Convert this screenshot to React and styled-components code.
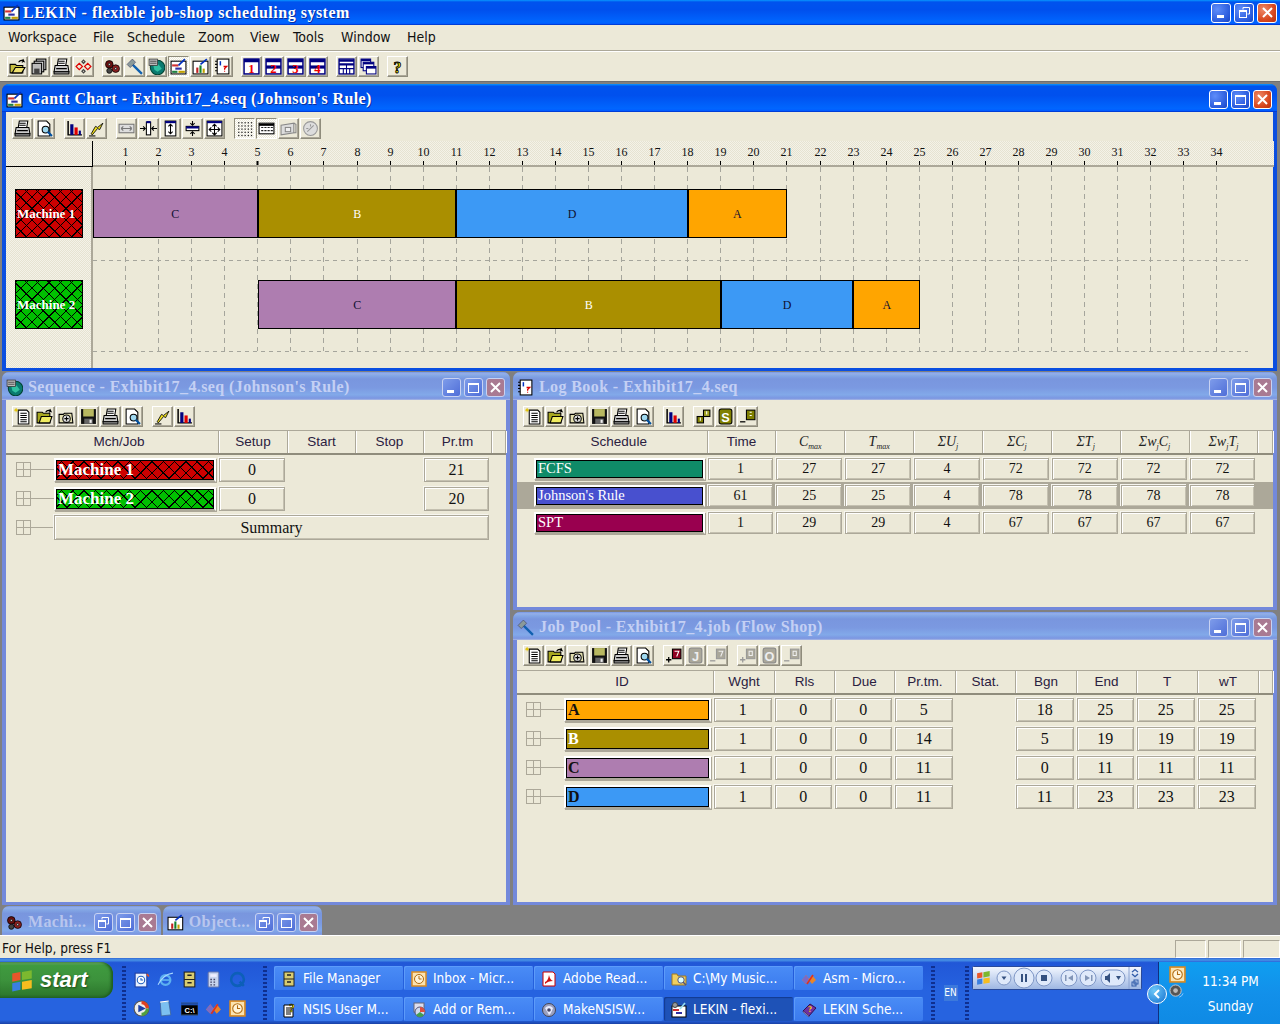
import React from 'react'
import styled, { createGlobalStyle, css } from 'styled-components'

const GlobalStyle = createGlobalStyle`
  html, body { margin: 0; padding: 0; background: #808080; }
  * { box-sizing: border-box; }
`

const SANS = `"Liberation Sans", Arial, sans-serif`
const UI = `"DejaVu Sans Condensed", "Liberation Sans", Arial, sans-serif`
const SERIF = `"Liberation Serif", "Times New Roman", serif`
const FACE = '#ECE9D8'
const UNIT = 33.07

const FLAG = (
  <g>
    <path d="M2 4 L7 3 L7 8 L2 9 Z" fill="#e8562a" />
    <path d="M8 3 L14 2 L14 7 L8 8 Z" fill="#7cb82f" />
    <path d="M2 10 L7 9 L7 14 L2 15 Z" fill="#3a7fe0" />
    <path d="M8 9 L14 8 L14 13 L8 14 Z" fill="#f6bd1f" />
  </g>
)

const winIcon = (n) => (
  <g>
    <rect x="1" y="1" width="14" height="14" fill="#fff" stroke="#000080" strokeWidth="1.4" />
    <rect x="1" y="1" width="14" height="3" fill="#000080" />
    {n > 1 && <rect x="1" y="7" width="14" height="3" fill="#000080" />}
    <text x="8" y="14" textAnchor="middle" fontSize="12" fontWeight="700" fontFamily={SERIF} fill="#f00000">{n}</text>
  </g>
)

const ICONS = {
  open: <g><path d="M1 6h5l1 1h6v7H1z" fill="#c8c040" stroke="#000" /><path d="M3 14l3-5h9l-3 5z" fill="#eee070" stroke="#000" /><path d="M9 4q2-3 5-1l-1-2m1 2l-2 1" fill="none" stroke="#000" /></g>,
  copies: <g><rect x="5" y="1" width="9" height="10" fill="#ccc" stroke="#000" /><rect x="3" y="3" width="9" height="10" fill="#ddd" stroke="#000" /><rect x="1" y="5" width="9" height="10" fill="#bbb" stroke="#000" /><rect x="3" y="10" width="5" height="5" fill="#444" /></g>,
  print: <g><path d="M5 1h8l-1 6H4z" fill="#fff" stroke="#000" /><path d="M2 7h12l1 6H1z" fill="#ccc" stroke="#000" /><path d="M1 13h14v2H1z" fill="#999" stroke="#000" /><path d="M5 3h6M5 5h6M3 10h10" stroke="#000" /></g>,
  net: <g fill="none" stroke="#d00" strokeWidth="1.1"><path d="M1 8l3-3 3 3-3 3zM9 8l3-3 3 3-3 3z" /><path d="M8 2l1.500 1.500L8 5 6.500 3.500zM8 11l1.500 1.500L8 14l-1.500-1.500z" stroke="#444" /></g>,
  gears: <g fill="#6a1010" stroke="#000" strokeWidth=".7"><circle cx="5" cy="6" r="3.6" /><circle cx="11" cy="10" r="3.6" fill="#8a2020" /><circle cx="5" cy="12" r="2.4" fill="#444" /><circle cx="5" cy="6" r="1" fill="#eee" /><circle cx="11" cy="10" r="1" fill="#eee" /></g>,
  hammer: <g><path d="M6 6l9 9" stroke="#1060b0" strokeWidth="2.2" /><path d="M1 6l5-5 3 3-5 5z" fill="#8a9a9a" stroke="#446" strokeWidth=".6" /></g>,
  globe: <g><circle cx="9" cy="9" r="6.8" fill="#0a7a70" stroke="#043" /><path d="M5 7l5-1 3 4-4 3-3-2z" fill="#30c0a0" /><rect x="1" y="1" width="8" height="6" fill="#bbb" stroke="#333" strokeWidth=".7" /><path d="M2 3h6M2 5h6" stroke="#555" /></g>,
  gantt: <g><rect x="1" y="3" width="14" height="12" fill="#fff" stroke="#000" /><path d="M2 6h6v2H2z" fill="#d03030" /><path d="M5 9h6v2H5z" fill="#3030a0" /><path d="M8 12h6v2H8z" fill="#c0a000" /><path d="M2 12h5v2H2z" fill="#208040" /><path d="M8 7l6-6" stroke="#0030c0" strokeWidth="1.6" /></g>,
  chart: <g><rect x="1" y="3" width="14" height="12" fill="#fff" stroke="#000" /><path d="M4 9h2v5H4z" fill="#c02020" /><path d="M7 7h2v7H7z" fill="#108030" /><path d="M10 10h2v4h-2z" fill="#c0a000" /><path d="M8 6l6-5" stroke="#0030c0" strokeWidth="1.6" /></g>,
  note: <g><rect x="3" y="1" width="11" height="14" fill="#fff" stroke="#000" /><path d="M3 3H1M3 6H1M3 9H1M3 12H1" stroke="#000" /><path d="M6 3v4" stroke="#0030c0" strokeWidth="1.4" /><path d="M9 8h3l-2 2v1" fill="none" stroke="#d00" strokeWidth="1.2" /><path d="M10 12v1" stroke="#d00" /></g>,
  w1: winIcon(1),
  w2: winIcon(2),
  w3: winIcon(3),
  w4: winIcon(4),
  tile: <g><rect x="1" y="1" width="14" height="14" fill="#fff" stroke="#000080" strokeWidth="1.3" /><path d="M1 2.5h14M1 6h14" stroke="#000080" strokeWidth="2" /><path d="M1 10h14M8 6v9M5 10v5M11 10v5" stroke="#000080" /></g>,
  cascade: <g><rect x="1" y="1" width="9" height="8" fill="#fff" stroke="#000080" /><path d="M1 2h9" stroke="#000080" strokeWidth="2" /><rect x="3" y="4" width="10" height="8" fill="#fff" stroke="#000080" /><path d="M3 5h10" stroke="#000080" strokeWidth="2" /><rect x="6" y="8" width="9" height="7" fill="#fff" stroke="#000080" /><path d="M6 9h9" stroke="#000080" strokeWidth="2" /></g>,
  help: <text x="8" y="14" textAnchor="middle" fontSize="15" fontWeight="700" fontFamily={SERIF} fill="#f5e800" stroke="#000" strokeWidth=".8">?</text>,
  preview: <g><path d="M2 1h8l3 3v11H2z" fill="#fff" stroke="#000" /><circle cx="9" cy="9" r="3.2" fill="#9fd8f0" stroke="#000" /><path d="M11 11l4 4" stroke="#0050a0" strokeWidth="2" /></g>,
  bars: <g><path d="M2 1v13h13" fill="none" stroke="#000" strokeWidth="1.4" /><path d="M4 4h3v10H4z" fill="#000080" /><path d="M8 7h3v7H8z" fill="#e00000" /><path d="M12 10h2v4h-2z" fill="#000080" /></g>,
  bolt: <g><path d="M3 13L7 6l2 1 5-4-3 6-2-1-5 6z" fill="#f0e020" stroke="#000" strokeWidth=".8" /><path d="M1 15h6" stroke="#000" /></g>,
  fitH: <g fill="none" stroke="#777"><rect x="1" y="4" width="14" height="8" fill="#ddd" /><path d="M3 8h10M3 8l2-2M3 8l2 2M13 8l-2-2M13 8l-2 2" /></g>,
  inH: <g fill="none" stroke="#000"><rect x="6" y="2" width="4" height="12" fill="#fff" /><path d="M6 2h4" stroke="#000080" strokeWidth="2" /><path d="M0 8h5M3 6l2 2-2 2M16 8h-5M13 6l-2 2 2 2" /></g>,
  outV: <g fill="none" stroke="#000"><rect x="3" y="1" width="10" height="14" fill="#fff" /><path d="M3 2h10" stroke="#000080" strokeWidth="2" /><path d="M8 4v9M6 6l2-2 2 2M6 11l2 2 2-2" /></g>,
  inV: <g fill="none" stroke="#000"><rect x="2" y="6" width="12" height="4" fill="#fff" /><path d="M2 7h12" stroke="#000080" strokeWidth="2" /><path d="M8 1v4M6 3l2 2 2-2M8 15v-4M6 13l2-2 2 2" /></g>,
  fitAll: <g fill="none" stroke="#000"><rect x="1" y="1" width="14" height="14" fill="#fff" /><path d="M1 2h14" stroke="#000080" strokeWidth="2" /><path d="M8 4v10M3 9h10M6 6l2-2 2 2M6 12l2 2 2-2M5 7L3 9l2 2M11 7l2 2-2 2" /></g>,
  dots: <g fill="#222">{[2, 5, 8, 11, 14].map((y) => [2, 5, 8, 11, 14].map((x) => <rect key={`${x}${y}`} x={x} y={y} width="1.2" height="1.2" />))}</g>,
  table: <g><rect x="1" y="3" width="14" height="10" fill="#fff" stroke="#000" /><path d="M1 4.500h14" stroke="#000" strokeWidth="2" /><path d="M3 7h2M6 7h2M9 7h2M12 7h2M3 10h2M6 10h2M9 10h2M12 10h2" stroke="#222" /></g>,
  grayNote: <g fill="none" stroke="#888"><path d="M1 5l12-2v9L1 14z" fill="#ddd" /><path d="M13 3l2 1v8l-2 0" /><rect x="5" y="7" width="5" height="4" fill="#eee" /></g>,
  grayDial: <g fill="#ddd" stroke="#999"><circle cx="8" cy="8" r="6.500" /><path d="M5 11l6-6M8 4v2M4 8h2" fill="none" /></g>,
  page: <g><path d="M4 2h8l2 2v11H4z" fill="#fff" stroke="#000" /><path d="M6 5h6M6 7h6M6 9h6M6 11h6M6 13h6" stroke="#000" /><path d="M1 1l2 2M3 1l-2 2M2 0v4M0 2h4" stroke="#e0c000" strokeWidth=".8" /></g>,
  folder: <g><path d="M1 4h5l1 1h6v9H1z" fill="#a8a820" stroke="#000" /><path d="M3 14l2-6h10l-2 6z" fill="#f0ec60" stroke="#000" /><path d="M9 4q2-3 5-1l-1-2m1 2l-2 1" fill="none" stroke="#000" /></g>,
  folderPlus: <g><path d="M1 6h4l1-1h7l1 9H1z" fill="#e4e0b0" stroke="#000" /><circle cx="8" cy="10" r="3.500" fill="#ddd" stroke="#000" /><path d="M6 10h4M8 8v4" stroke="#000" /></g>,
  save: <g><rect x="1" y="1" width="14" height="14" fill="#111" /><rect x="3" y="1" width="10" height="7" fill="#b8b860" /><rect x="4" y="10" width="8" height="5" fill="#666" /><rect x="9" y="11" width="2" height="3" fill="#eee" /></g>,
  chainS: <g><rect x="2" y="8" width="6" height="6" fill="#808000" stroke="#000" /><rect x="8" y="2" width="6" height="6" fill="#a0a020" stroke="#000" /><path d="M5 9v3M11 3v3" stroke="#fff" /></g>,
  sBox: <g><rect x="2" y="1" width="12" height="14" rx="2" fill="#808000" stroke="#000" /><text x="8" y="13" textAnchor="middle" fontSize="12" fontWeight="700" fontFamily={SANS} fill="#fff">S</text></g>,
  minusS: <g><path d="M1 13h5" stroke="#000" strokeWidth="1.2" /><rect x="7" y="2" width="8" height="9" fill="#808000" stroke="#000" /><path d="M10 4h2M10 7h2" stroke="#fff" /></g>,
  plusJ: <g><path d="M1 12h5M3.500 9.500v5" stroke="#000" strokeWidth="1.2" /><rect x="7" y="2" width="8" height="9" fill="#900020" stroke="#000" /><path d="M9 4h4l-2 5" fill="none" stroke="#fff" /></g>,
  jBox: <g><rect x="2" y="1" width="12" height="14" rx="2" fill="#aaa79a" stroke="#888" /><text x="8" y="13" textAnchor="middle" fontSize="12" fontWeight="700" fontFamily={SANS} fill="#eee">J</text></g>,
  minusJ: <g><path d="M1 13h5" stroke="#999" strokeWidth="1.2" /><rect x="7" y="2" width="8" height="9" fill="#aaa79a" stroke="#999" /><path d="M9 4h4l-2 5" fill="none" stroke="#eee" /></g>,
  plusO: <g><path d="M1 12h5M3.500 9.500v5" stroke="#999" strokeWidth="1.2" /><rect x="7" y="2" width="8" height="9" fill="#aaa79a" stroke="#999" /><rect x="9.500" y="4" width="3" height="4" fill="none" stroke="#eee" /></g>,
  oBox: <g><rect x="2" y="1" width="12" height="14" rx="2" fill="#aaa79a" stroke="#888" /><text x="8" y="13" textAnchor="middle" fontSize="12" fontWeight="700" fontFamily={SANS} fill="#eee">O</text></g>,
  minusO: <g><path d="M1 13h5" stroke="#999" strokeWidth="1.2" /><rect x="7" y="2" width="8" height="9" fill="#aaa79a" stroke="#999" /><rect x="9.500" y="4" width="3" height="4" fill="none" stroke="#eee" /></g>,
  // taskbar and quick launch
  outlook: <g><rect x="1" y="1" width="14" height="14" fill="#fbe3b0" stroke="#d98a20" strokeWidth="1.5" /><circle cx="8" cy="8" r="4.500" fill="#fff4d8" stroke="#b06a10" /><path d="M8 5v3h2.500" fill="none" stroke="#b06a10" /></g>,
  cabinet: <g><rect x="3" y="1" width="10" height="14" fill="#d8cc70" stroke="#222" /><path d="M3 8h10" stroke="#222" /><path d="M6 4h4M6 11h4" stroke="#222" strokeWidth="1.4" /></g>,
  pdf: <g><path d="M2 1h10l2 2v12H2z" fill="#fff" stroke="#c00" /><path d="M4 11q3-1 4-7 1 5 4 6-5 0-8 3z" fill="#d01010" /></g>,
  musicFolder: <g><path d="M1 3h5l1 2h8v9H1z" fill="#f0cf60" stroke="#a07820" /><circle cx="10" cy="9" r="3.200" fill="#dff" stroke="#557" /><path d="M12 11l3 3" stroke="#557" strokeWidth="1.500" /></g>,
  asm: <g><path d="M1 9l4-5 3 4 3-4 4 5-4 4-3-4-3 4z" fill="#e8862a" /><path d="M5 4l3 4-3 5-4-4z" fill="#7a6ac8" /><path d="M6 13l6-9" stroke="#e03020" strokeWidth="1.500" /></g>,
  nsis: <g><path d="M3 3h9v12H3z" fill="#fff" stroke="#000" /><path d="M5 6h5M5 8h5M5 10h5M5 12h5" stroke="#000" /><text x="11" y="10" textAnchor="middle" fontSize="12" fontWeight="700" fontFamily={SERIF} fill="#f5e800" stroke="#000" strokeWidth=".5">?</text></g>,
  addRemove: <g><rect x="3" y="1" width="10" height="9" fill="#dde" stroke="#667" /><circle cx="9" cy="10" r="5" fill="#cfd8f0" stroke="#557" /><path d="M9 10V5a5 5 0 0 1 5 5z" fill="#e05040" /><path d="M9 10l4 3a5 5 0 0 1-8 0z" fill="#40a050" /></g>,
  makensis: <g><circle cx="8" cy="8" r="6.500" fill="#9aa0c0" stroke="#445" /><path d="M4 6q4-4 8 0-2 6-4 7" fill="#e8ecff" /><circle cx="8" cy="8" r="1.800" fill="#446" /></g>,
  lekinTask: <g><rect x="1" y="4" width="14" height="11" fill="#fff" stroke="#000" /><path d="M2 7h6v2H2z" fill="#d03030" /><path d="M5 10h6v2H5z" fill="#3030a0" /><path d="M9 7l5-6" stroke="#9de" strokeWidth="1.600" /><circle cx="4" cy="3" r="2.500" fill="#999" stroke="#444" /></g>,
  book: <g><path d="M2 9l7-7 6 4-7 8z" fill="#7030a0" stroke="#301050" /><path d="M2 9l6 5v1L2 10z" fill="#eee" stroke="#301050" strokeWidth=".5" /><text x="9" y="10" textAnchor="middle" fontSize="8" fontWeight="700" fontFamily={SERIF} fill="#fd0">?</text></g>,
  clipboard: <g><rect x="2" y="2" width="11" height="13" fill="#e8f0ff" stroke="#2040a0" /><circle cx="7.500" cy="8.500" r="3.500" fill="#fff" stroke="#2060c0" /><path d="M7.500 6.500v2h2" fill="none" stroke="#2060c0" /><path d="M13 3l2 2" stroke="#e05020" strokeWidth="1.500" /></g>,
  ie: <g><circle cx="8" cy="8.500" r="4.500" fill="none" stroke="#5cb0f0" strokeWidth="2.200" /><path d="M4 8.500h8" stroke="#5cb0f0" strokeWidth="1.600" /><path d="M1 13q5-10 14-11" fill="none" stroke="#a8d8ff" /></g>,
  calc: <g><rect x="3" y="1" width="10" height="14" rx="1" fill="#c8d4ee" stroke="#6a7ab0" /><rect x="5" y="3" width="6" height="2.500" fill="#eef" /><path d="M5 8h1.500M8 8h1.500M5 10.500h1.500M8 10.500h1.500M5 13h1.500M8 13h1.500" stroke="#446" strokeWidth="1.200" /></g>,
  quicktime: <g fill="none"><circle cx="8" cy="8" r="6" stroke="#0d5fb8" strokeWidth="2.400" /><path d="M10 10l4 4" stroke="#0d5fb8" strokeWidth="2.400" /></g>,
  player: <g><circle cx="8" cy="8" r="7" fill="#eee" stroke="#555" /><path d="M8 1a7 7 0 0 1 7 7h-3a4 4 0 0 0-4-4z" fill="#e04020" /><path d="M15 8a7 7 0 0 1-7 7v-3a4 4 0 0 0 4-4z" fill="#50a040" /><path d="M5 4.500L12 8l-7 3.500z" fill="#1a3fa8" /></g>,
  notepad: <g><path d="M3 2l8-1 2 13-9 1z" fill="#7cc0f0" stroke="#406090" strokeWidth=".7" /><path d="M3 2l8-1" stroke="#fff" /></g>,
  cmd: <g><rect x="0" y="3" width="16" height="11" fill="#000" stroke="#345" /><rect x="0" y="3" width="16" height="2" fill="#2050b0" /><text x="8" y="12.500" textAnchor="middle" fontSize="7" fontWeight="700" fontFamily={SANS} fill="#fff">C:\</text></g>,
}

const Icon = ({ name, size = 17, className }) => (
  <svg className={className} width={size} height={size} viewBox="0 0 16 16">{ICONS[name]}</svg>
)

// window chrome

const XP_ACTIVE = 'linear-gradient(180deg,#0997ff 0,#0053ee 8%,#0050ee 40%,#0066ff 88%,#005bff 95%,#003dd7 96%,#003dd7 100%)'
const XP_IDLE = 'linear-gradient(180deg,#7697e7 0,#94afe8 6%,#82a5e4 14%,#7996de 25%,#7b99e1 56%,#82a9e9 81%,#7b96e1 94%,#abbae3 100%)'

const ChromeBtn = styled.span`
  flex: none;
  width: ${(p) => p.$size || 19}px;
  height: ${(p) => p.$size || 19}px;
  display: flex;
  align-items: center;
  justify-content: center;
  border: 1px solid ${(p) => (p.$idle ? '#c8d2f2' : '#fff')};
  border-radius: 3px;
  background: ${(p) => {
    if (p.$close) return p.$idle ? '#a97a92' : 'radial-gradient(circle at 30% 30%,#ee8a68,#d8481f 60%,#b8300e)'
    return p.$idle ? 'linear-gradient(135deg,#7e9cea,#4f6ed8)' : 'radial-gradient(circle at 30% 30%,#5e8dfa,#2a5bdc 70%,#1a45c0)'
  }};
`

const ChromeGroup = styled.div`
  display: flex;
  gap: 3px;
  margin-left: auto;
`

const MinGlyph = () => <svg width="13" height="13" viewBox="0 0 13 13"><rect x="2" y="9" width="7" height="3" fill="#fff" /></svg>
const RestoreGlyph = () => <svg width="13" height="13" viewBox="0 0 13 13" fill="none" stroke="#fff"><path d="M5 3.500V1.500h6.500V8H9.500" /><rect x="1.500" y="4.500" width="7" height="7" /><path d="M1.500 5h7" strokeWidth="2" /></svg>
const MaxGlyph = () => <svg width="13" height="13" viewBox="0 0 13 13" fill="none" stroke="#fff"><rect x="1.500" y="2.500" width="10" height="9" /><path d="M1.500 3h10" strokeWidth="2" /></svg>

// kinds: window = min/max/close, app = min/restore/close, docked = restore/max/close
const WinButtons = ({ idle, kind = 'window', size }) => (
  <ChromeGroup>
    <ChromeBtn $idle={idle} $size={size}>{kind === 'docked' ? <RestoreGlyph /> : <MinGlyph />}</ChromeBtn>
    <ChromeBtn $idle={idle} $size={size}>{kind === 'app' ? <RestoreGlyph /> : <MaxGlyph />}</ChromeBtn>
    <ChromeBtn $idle={idle} $close $size={size}>
      <svg width="13" height="13" viewBox="0 0 13 13" stroke="#fff" strokeWidth="2"><path d="M2 2l9 9M11 2l-9 9" /></svg>
    </ChromeBtn>
  </ChromeGroup>
)

const Frame = styled.section`
  display: flex;
  flex-direction: column;
  flex: ${(p) => p.$flex || 'none'};
  width: ${(p) => (p.$w ? `${p.$w}px` : 'auto')};
  height: ${(p) => (p.$h ? `${p.$h}px` : 'auto')};
  padding: 0 4px 3px;
  border-radius: 7px 7px 0 0;
  background: ${(p) => (p.$idle ? '#7389db' : '#0a4ee0')};
`

const FrameTitle = styled.header`
  flex: none;
  display: flex;
  align-items: center;
  gap: 5px;
  height: 28px;
  margin: 0 -4px;
  padding: 2px 5px 0 4px;
  border-radius: 7px 7px 0 0;
  background: ${(p) => (p.$idle ? XP_IDLE : XP_ACTIVE)};
  font: 700 16px/1 ${SERIF};
  letter-spacing: 0.4px;
  color: ${(p) => (p.$idle ? '#c4d0f4' : '#fff')};
  text-shadow: ${(p) => (p.$idle ? 'none' : '1px 1px 0 #0a2f9e')};
  white-space: nowrap;
`

const FrameBody = styled.div`
  flex: 1;
  min-height: 0;
  display: flex;
  flex-direction: column;
  background: ${FACE};
`

const Window = ({ title, icon, idle, w, h, flex, children }) => (
  <Frame $idle={idle} $w={w} $h={h} $flex={flex}>
    <FrameTitle $idle={idle}>
      <Icon name={icon} size={17} />
      {title}
      <WinButtons idle={idle} />
    </FrameTitle>
    <FrameBody>{children}</FrameBody>
  </Frame>
)

// toolbars

const ToolRow = styled.div`
  flex: none;
  display: flex;
  gap: ${(p) => p.$gap || 9}px;
  height: ${(p) => p.$h || 30}px;
  padding: ${(p) => p.$top || 6}px 0 0 ${(p) => p.$left || 6}px;
`

const ToolGroup = styled.div`
  display: flex;
  gap: 1px;
`

const ToolBtn = styled.span`
  width: 21px;
  height: 21px;
  display: flex;
  align-items: center;
  justify-content: center;
  border: 1px solid;
  border-color: #fff #8f8c7c #8f8c7c #fff;
  box-shadow: inset -1px -1px 0 #aca899;
  background: ${FACE};
  ${(p) =>
    p.$pressed &&
    css`
      border-color: #8f8c7c #fff #fff #8f8c7c;
      box-shadow: none;
      background: repeating-conic-gradient(#fff 0 25%, ${FACE} 0 50%) 0 0 / 2px 2px;
    `}
`

const Tools = ({ groups, pressed = [], h, top, left, gap }) => (
  <ToolRow $h={h} $top={top} $left={left} $gap={gap}>
    {groups.map((group, i) => (
      <ToolGroup key={i}>
        {group.map((name, j) => (
          <ToolBtn key={j} $pressed={pressed.includes(name)}><Icon name={name} /></ToolBtn>
        ))}
      </ToolGroup>
    ))}
  </ToolRow>
)

// application frame

const Screen = styled.div`
  width: 1280px;
  height: 1024px;
  overflow: hidden;
  display: flex;
  flex-direction: column;
  background: ${FACE};
  font-family: ${SANS};
`

const AppTitle = styled.div`
  flex: none;
  height: 25px;
  display: flex;
  align-items: center;
  gap: 3px;
  padding: 0 3px;
  background: ${XP_ACTIVE};
  color: #fff;
  font: 700 16px/1 ${SERIF};
  letter-spacing: 0.5px;
  text-shadow: 1px 1px 0 #0a2f9e;
`

const MenuBar = styled.nav`
  flex: none;
  height: 25px;
  display: flex;
  align-items: center;
  padding: 0 0 2px 8px;
  font: 14px/1 ${UI};
  color: #111;
`

const MenuItem = styled.span`
  flex: none;
  width: ${(p) => p.$w}px;
`

const MENUS = [['Workspace', 85], ['File', 34], ['Schedule', 71], ['Zoom', 52], ['View', 43], ['Tools', 48], ['Window', 66], ['Help', 40]]

const MainTools = styled.div`
  flex: none;
  height: 31px;
  border-top: 1px solid #aca899;
  box-shadow: inset 0 1px 0 #fff;
`

const Desktop = styled.main`
  flex: none;
  height: 854px;
  display: flex;
  flex-direction: column;
  gap: 1px;
  padding: 2px 3px 0 2px;
  background: #808080;
  border-top: 1px solid #6f6f6f;
`

const LowerRow = styled.div`
  flex: none;
  height: 533px;
  display: flex;
  gap: 3px;
`

const RightStack = styled.div`
  flex: 1;
  display: flex;
  flex-direction: column;
  gap: 2px;
`

const MinRow = styled.div`
  display: flex;
  gap: 2px;
`

const MinWin = styled.div`
  width: 159px;
  height: 30px;
  display: flex;
  align-items: center;
  gap: 5px;
  padding: 2px 4px 0 4px;
  border-radius: 7px 7px 0 0;
  background: ${XP_IDLE};
  color: #b8c6ee;
  font: 700 16px/1 ${SERIF};
  letter-spacing: 0.34px;
  white-space: nowrap;
`

// gantt

const Ruler = styled.div`
  flex: none;
  height: 26px;
  display: flex;
`

const Dither = css`
  background: repeating-conic-gradient(#f4f2e8 0 25%, #e6e3d1 0 50%) 0 0 / 2px 2px;
`

const RulerCorner = styled.div`
  flex: none;
  width: 87px;
  ${Dither};
  border-right: 1px solid #000;
  border-bottom: 1px solid #000;
`

const RulerScale = styled.div`
  flex: 1;
  ${Dither};
  border-bottom: 2px solid #aca899;
`

const ChartArea = styled.div`
  flex: 1;
  display: flex;
  min-height: 0;
`

const LaneLabels = styled.div`
  flex: none;
  width: 87px;
  ${Dither};
  border-right: 2px solid #aca899;
`

const LaneLabelRow = styled.div`
  height: 91px;
  padding: 22px 0 0 9px;
`

const Hatch = (color) => css`
  background-color: ${color};
  background-image:
    repeating-linear-gradient(45deg, transparent 0 7px, #000 7px 8px),
    repeating-linear-gradient(-45deg, transparent 0 7px, #000 7px 8px);
`

const MachineTile = styled.div`
  width: 68px;
  height: 49px;
  display: flex;
  align-items: center;
  padding: 0 0 1px 1px;
  border: 1px solid #000;
  ${(p) => Hatch(p.$color)};
  color: #fff;
  font: 700 13px/1 ${SERIF};
  white-space: nowrap;
`

const Plot = styled.div`
  position: relative;
  flex: 1;
`

const PlotGrid = styled.svg`
  position: absolute;
  inset: 0;
`

const Lane = styled.div`
  position: relative;
  height: 91px;
  display: flex;
  margin-left: -0.4px;
  padding: 22px 0 0 0;
`

const Bar = styled.div`
  flex: none;
  height: 49px;
  display: flex;
  align-items: center;
  justify-content: center;
  border: 1px solid #000;
  background: ${(p) => p.$color};
  color: ${(p) => p.$text || '#101030'};
  font: 12px/1 ${SERIF};
`

const JOBS = {
  A: { color: '#FFA500' },
  B: { color: '#AA8F00', text: '#fff' },
  C: { color: '#AE7DB0' },
  D: { color: '#3C99F5' },
}

const MACHINES = [
  { name: 'Machine 1', color: '#CC0000', start: 0, seq: [['C', 5], ['B', 6], ['D', 7], ['A', 3]] },
  { name: 'Machine 2', color: '#00C000', start: 5, seq: [['C', 6], ['B', 8], ['D', 4], ['A', 2.03]] },
]

const GanttChart = () => {
  const ticks = Array.from({ length: 34 }, (_, i) => i + 1)
  const tickX = (n) => Math.round(n * UNIT) - 0.5
  return (
    <>
      <Ruler>
        <RulerCorner />
        <RulerScale>
          <svg width="1181" height="24">
            {ticks.map((n) => (
              <g key={n}>
                <text x={tickX(n)} y="15" textAnchor="middle" fontSize="12" fontFamily={SERIF} fill="#111">{n}</text>
                <line x1={tickX(n)} x2={tickX(n)} y1="20" y2="24" stroke="#000" strokeWidth={n === 5 ? 2 : 1} />
              </g>
            ))}
          </svg>
        </RulerScale>
      </Ruler>
      <ChartArea>
        <LaneLabels>
          {MACHINES.map((m) => (
            <LaneLabelRow key={m.name}>
              <MachineTile $color={m.color}>{m.name}</MachineTile>
            </LaneLabelRow>
          ))}
        </LaneLabels>
        <Plot>
          <PlotGrid width="1181" height="199">
            {ticks.map((n) => (
              <line key={n} x1={tickX(n)} x2={tickX(n)} y1="0" y2="184" stroke="#a5a59c" strokeDasharray="5 4" />
            ))}
            <line x1="0" x2="1155" y1="93.5" y2="93.5" stroke="#a5a59c" strokeDasharray="4 4" />
            <line x1="0" x2="1155" y1="184.5" y2="184.5" stroke="#a5a59c" strokeDasharray="4 4" />
          </PlotGrid>
          {MACHINES.map((m) => (
            <Lane key={m.name} style={{ paddingLeft: m.start * UNIT }}>
              {m.seq.map(([job, len]) => (
                <Bar key={job} $color={JOBS[job].color} $text={JOBS[job].text} style={{ width: len * UNIT }}>{job}</Bar>
              ))}
            </Lane>
          ))}
        </Plot>
      </ChartArea>
    </>
  )
}

// tables

const HeaderRow = styled.div`
  flex: none;
  height: 25px;
  display: grid;
  grid-template-columns: ${(p) => p.$cols};
  border-top: 1px solid #aca899;
  border-bottom: 2px solid #8f8c7c;
`

const HeaderCell = styled.div`
  display: flex;
  align-items: center;
  justify-content: center;
  padding-bottom: 1px;
  border-right: 1px solid #aca899;
  box-shadow: 1px 0 0 #fff;
  font: 13.5px/1 ${SANS};
  color: #2a2040;
  white-space: nowrap;
  &:first-child { padding-left: 14px; }
`

const MathHead = styled.span`
  font: italic 14px/1 ${SERIF};
  color: #222;
  sub { font-size: 8px; vertical-align: -3px; line-height: 0; }
`

const DataRow = styled.div`
  height: ${(p) => p.$h}px;
  display: grid;
  grid-template-columns: ${(p) => p.$cols};
  align-items: center;
  background: ${(p) => (p.$selected ? '#aca899' : 'transparent')};
`

const NameCol = styled.div`
  display: flex;
  align-items: center;
  padding-left: ${(p) => p.$pad || 0}px;
  grid-column: ${(p) => p.$span || 'auto'};
`

const TreeBox = styled.span`
  flex: none;
  width: 15px;
  height: 15px;
  margin-left: ${(p) => p.$ml || 10}px;
  border: 1px solid #aca899;
  background:
    linear-gradient(#aca899, #aca899) center / 100% 1px no-repeat,
    linear-gradient(#aca899, #aca899) center / 1px 100% no-repeat;
`

const TreeLine = styled.span`
  flex: none;
  width: 23px;
  height: 1px;
  background: #aca899;
`

const Tile = styled.div`
  flex: 1;
  min-width: 0;
  height: ${(p) => p.$h}px;
  margin-right: 3px;
  border: 2px solid #fff;
  border-color: #fff #fff #aca899 #fff;
  box-shadow: 1px 1px 0 #aca899;
`

const TileFace = styled.div`
  height: 100%;
  display: flex;
  align-items: center;
  padding-left: 1px;
  border: 1px solid #000;
  ${(p) =>
    p.$hatch
      ? Hatch(p.$color)
      : css`
          background: ${p.$color};
        `}
  color: ${(p) => p.$text || '#fff'};
  font: ${(p) => (p.$bold ? 700 : 400)} ${(p) => p.$fs || 14.5}px/1 ${SERIF};
  white-space: nowrap;
`

const Cell = styled.div`
  height: ${(p) => p.$h}px;
  margin-right: ${(p) => p.$mr || 3}px;
  display: flex;
  align-items: center;
  justify-content: center;
  border: 1px solid #aca899;
  box-shadow: inset 1px 1px 0 #fff, inset -1px -1px 0 #c4c0b0, -1px -1px 0 #f7f6f0;
  background: ${FACE};
  font: ${(p) => p.$fs || 16}px/1 ${SERIF};
  color: #111;
  ${(p) => p.$wide && css`flex: 1;`}
`

const Tree = ({ ml }) => (
  <>
    <TreeBox $ml={ml} />
    <TreeLine />
  </>
)

const SEQ_COLS = '213px 69px 68px 68px 68px 1fr'
const LOG_COLS = '190.5px repeat(8, 68.86px) 1fr'
const JOB_COLS = '197px 61px 60px 60px 61px 60px 61px 60px 61px 61px 1fr'

const M = ({ children }) => <MathHead>{children}</MathHead>

const LOG_HEADS = [
  'Schedule',
  'Time',
  <M>C<sub>max</sub></M>,
  <M>T<sub>max</sub></M>,
  <M>ΣU<sub>j</sub></M>,
  <M>ΣC<sub>j</sub></M>,
  <M>ΣT<sub>j</sub></M>,
  <M>Σw<sub>j</sub>C<sub>j</sub></M>,
  <M>Σw<sub>j</sub>T<sub>j</sub></M>,
  '',
]

const LOG_ROWS = [
  { name: 'FCFS', color: '#0F8B68', vals: [1, 27, 27, 4, 72, 72, 72, 72] },
  { name: "Johnson's Rule", color: '#4850CF', vals: [61, 25, 25, 4, 78, 78, 78, 78], selected: true },
  { name: 'SPT', color: '#99004F', vals: [1, 29, 29, 4, 67, 67, 67, 67] },
]

const JOB_HEADS = ['ID', 'Wght', 'Rls', 'Due', 'Pr.tm.', 'Stat.', 'Bgn', 'End', 'T', 'wT', '']

const JOB_ROWS = [
  { id: 'A', vals: [1, 0, 0, 5, null, 18, 25, 25, 25] },
  { id: 'B', vals: [1, 0, 0, 14, null, 5, 19, 19, 19] },
  { id: 'C', vals: [1, 0, 0, 11, null, 0, 11, 11, 11] },
  { id: 'D', vals: [1, 0, 0, 11, null, 11, 23, 23, 23] },
]

const FILE_TOOLS = ['page', 'folder', 'folderPlus', 'save', 'print', 'preview']

const SequenceTable = () => (
  <>
    <HeaderRow $cols={SEQ_COLS}>
      {['Mch/Job', 'Setup', 'Start', 'Stop', 'Pr.tm', ''].map((h) => <HeaderCell key={h}>{h}</HeaderCell>)}
    </HeaderRow>
    {[['Machine 1', '#CC0000', 21], ['Machine 2', '#00C000', 20]].map(([name, color, prtm]) => (
      <DataRow key={name} $cols={SEQ_COLS} $h={29}>
        <NameCol>
          <Tree />
          <Tile $h={24}><TileFace $hatch $color={color} $bold $fs={17}>{name}</TileFace></Tile>
        </NameCol>
        <Cell $h={24}>0</Cell>
        <span />
        <span />
        <Cell $h={24}>{prtm}</Cell>
      </DataRow>
    ))}
    <DataRow $cols={SEQ_COLS} $h={29}>
      <NameCol $span="1 / 6">
        <Tree />
        <Cell $h={25} $wide>Summary</Cell>
      </NameCol>
    </DataRow>
  </>
)

const LogTable = () => (
  <>
    <HeaderRow $cols={LOG_COLS}>
      {LOG_HEADS.map((h, i) => <HeaderCell key={i}>{h}</HeaderCell>)}
    </HeaderRow>
    {LOG_ROWS.map((r) => (
      <DataRow key={r.name} $cols={LOG_COLS} $h={27} $selected={r.selected}>
        <NameCol $pad={17}>
          <Tile $h={22}><TileFace $color={r.color}>{r.name}</TileFace></Tile>
        </NameCol>
        {r.vals.map((v, i) => <Cell key={i} $h={22} $fs={14}>{v}</Cell>)}
      </DataRow>
    ))}
  </>
)

const JobTable = () => (
  <>
    <HeaderRow $cols={JOB_COLS}>
      {JOB_HEADS.map((h, i) => <HeaderCell key={i}>{h}</HeaderCell>)}
    </HeaderRow>
    {JOB_ROWS.map((r) => (
      <DataRow key={r.id} $cols={JOB_COLS} $h={29}>
        <NameCol>
          <Tree ml={9} />
          <Tile $h={24}>
            <TileFace $color={JOBS[r.id].color} $text={r.id === 'B' ? '#fff' : '#111'} $bold $fs={16}>{r.id}</TileFace>
          </Tile>
        </NameCol>
        {r.vals.map((v, i) => (v === null ? <span key={i} /> : <Cell key={i} $h={24} $mr={3.5}>{v}</Cell>))}
      </DataRow>
    ))}
  </>
)

// status and taskbar

const StatusBar = styled.footer`
  flex: none;
  height: 23px;
  display: flex;
  align-items: center;
  border-top: 1px solid #fff;
  padding: 4px 0 0 2px;
  font: 13.5px/1 ${UI};
  color: #111;
  white-space: nowrap;
`

const StatusPane = styled.span`
  flex: none;
  height: 18px;
  width: ${(p) => p.$w}px;
  margin-left: ${(p) => p.$ml || '2px'};
  border: 1px solid;
  border-color: #aca899 #fff #fff #aca899;
`

const Taskbar = styled.div`
  position: relative;
  flex: none;
  height: 66px;
  display: flex;
  background: linear-gradient(180deg, #3168d5 0, #4993e6 3%, #2157d7 7%, #2663e0 50%, #2663e0 94%, #1941a5 100%);
  color: #fff;
  font: 13.5px/1 ${UI};
`

const StartBtn = styled.div`
  flex: none;
  width: 113px;
  height: 36px;
  margin-top: 4px;
  display: flex;
  align-items: center;
  gap: 5px;
  padding-left: 9px;
  border-radius: 0 12px 12px 0;
  background: linear-gradient(180deg, #6fae6a 0, #3f9a3f 10%, #3c923c 50%, #2e7a2e 90%, #25682a 100%);
  box-shadow: inset -2px 0 3px #1d5a1d;
  font: italic 700 22px/1 ${SANS};
  text-shadow: 1px 1px 2px #1a4a1a;
`

const Grip = styled.span`
  flex: none;
  width: 4px;
  height: 56px;
  margin: 8px 0 0 ${(p) => p.$ml}px;
  background: repeating-linear-gradient(180deg, #0f2f8f 0 2px, transparent 2px 4px);
`

const QuickGrid = styled.div`
  flex: none;
  width: 130px;
  margin: 7px 0 0 4px;
  display: grid;
  grid-template-columns: repeat(5, 23.8px);
  grid-auto-rows: 29px;
  justify-items: center;
  align-items: center;
`

const TaskGrid = styled.div`
  flex: none;
  margin: 8px 0 0 7px;
  display: grid;
  grid-template-columns: repeat(5, 128.5px);
  grid-auto-rows: 24px;
  column-gap: 1.5px;
  row-gap: 7px;
`

const TaskBtn = styled.div`
  display: flex;
  align-items: center;
  gap: 6px;
  padding: 1px 0 0 7px;
  border-radius: 2px;
  background: ${(p) => (p.$active ? '#1e52b7' : 'linear-gradient(180deg,#4a8cf6,#3a7aee)')};
  box-shadow: ${(p) => (p.$active ? 'inset 1px 1px 1px #123a8f' : 'inset 1px 1px 0 #5c9bfa')};
  white-space: nowrap;
`

const LangTag = styled.span`
  flex: none;
  width: 14px;
  height: 16px;
  margin: 27px 0 0 9px;
  display: flex;
  align-items: center;
  justify-content: center;
  background: #3c79dc;
  font-size: 10px;
`

const MediaBar = styled.svg`
  flex: none;
  margin: 8px 0 0 3px;
`

const Tray = styled.div`
  flex: none;
  width: 122px;
  height: 62px;
  margin: 4px 0 0 auto;
  display: flex;
  border-left: 1px solid #10307f;
  background: linear-gradient(180deg, #0f9ef0, #1290ea 50%, #0f8ae4);
`

const TrayIcons = styled.div`
  flex: none;
  width: 36px;
  padding: 4px 0 0 10px;
  display: flex;
  flex-direction: column;
  gap: 1px;
`

const Clock = styled.div`
  flex: 1;
  display: flex;
  flex-direction: column;
  align-items: center;
  gap: 11px;
  padding: 13px 14px 0 0;
`

const TrayArrow = styled.span`
  position: absolute;
  left: 1147px;
  top: 26px;
  width: 20px;
  height: 20px;
  display: flex;
  align-items: center;
  justify-content: center;
  border: 1px solid #fff;
  border-radius: 50%;
  background: radial-gradient(circle at 35% 30%, #6cc8f8, #1470d0);
`

const TASKS = [
  ['cabinet', 'File Manager'],
  ['outlook', 'Inbox - Micr...'],
  ['pdf', 'Adobe Read...'],
  ['musicFolder', 'C:\\My Music...'],
  ['asm', 'Asm - Micro...'],
  ['nsis', 'NSIS User M...'],
  ['addRemove', 'Add or Rem...'],
  ['makensis', 'MakeNSISW...'],
  ['lekinTask', 'LEKIN - flexi...', true],
  ['book', 'LEKIN Sche...'],
]

const QUICK = ['clipboard', 'ie', 'cabinet', 'calc', 'quicktime', 'player', 'notepad', 'cmd', 'asm', 'outlook']

const MediaPlayer = () => (
  <MediaBar width="170" height="24" viewBox="0 0 170 24">
    <defs>
      <linearGradient id="mp" x1="0" y1="0" x2="0" y2="1">
        <stop offset="0" stopColor="#f4f8ff" />
        <stop offset="1" stopColor="#9db6e2" />
      </linearGradient>
    </defs>
    <rect x="0.5" y="0.5" width="169" height="23" rx="1" fill="url(#mp)" stroke="#2a4a9a" />
    <g transform="translate(3,3) scale(1.05)">{FLAG}</g>
    <g fill="#dfe9fa" stroke="#7f97c6">
      <circle cx="32" cy="12" r="7" />
      <circle cx="52" cy="12" r="10" />
      <circle cx="72" cy="12" r="8" />
      <circle cx="97" cy="12" r="8" />
      <circle cx="116" cy="12" r="8" />
      <rect x="129" y="4" width="24" height="16" rx="8" />
    </g>
    <g fill="#34507f">
      <path d="M29.5 10.5h5l-2.5 3.5z" />
      <rect x="49" y="8" width="2" height="8" />
      <rect x="53" y="8" width="2" height="8" />
      <rect x="69" y="9" width="6" height="6" />
      <path d="M93 9h1.500v6H93zM101 9v6l-5-3zM113 9v6l5-3zM119 9h1.500v6H119z" opacity=".55" />
      <path d="M133 10h2l3-3v10l-3-3h-2zM144 10h5l-2.500 4z" />
    </g>
    <path d="M157 1v22" stroke="#8ca4d2" />
    <path d="M160 8l3-3 3 3M160 10l3 3 3-3" transform="translate(0,-1) scale(1,.9)" fill="none" stroke="#2f5aa8" strokeWidth="1.300" />
    <rect x="160" y="16" width="4" height="4" fill="none" stroke="#2f5aa8" />
    <rect x="162" y="14" width="4" height="4" fill="none" stroke="#2f5aa8" />
  </MediaBar>
)

const App = () => (
  <Screen>
    <GlobalStyle />
    <AppTitle>
      <Icon name="gantt" size={17} />
      LEKIN - flexible job-shop scheduling system
      <WinButtons kind="app" size={20} />
    </AppTitle>
    <MenuBar>
      {MENUS.map(([m, w]) => <MenuItem key={m} $w={w}>{m}</MenuItem>)}
    </MenuBar>
    <MainTools>
      <Tools
        h={30}
        top={5}
        left={7}
        gap={8}
        pressed={['gantt']}
        groups={[
          ['open', 'copies', 'print', 'net'],
          ['gears', 'hammer', 'globe', 'gantt', 'chart', 'note'],
          ['w1', 'w2', 'w3', 'w4'],
          ['tile', 'cascade'],
          ['help'],
        ]}
      />
    </MainTools>
    <Desktop>
      <Window title="Gantt Chart - Exhibit17_4.seq (Johnson's Rule)" icon="gantt" h={287}>
        <Tools
          h={29}
          pressed={['dots', 'table']}
          groups={[['print', 'preview'], ['bars', 'bolt'], ['fitH', 'inH', 'outV', 'inV', 'fitAll'], ['dots', 'table', 'grayNote', 'grayDial']]}
        />
        <GanttChart />
      </Window>
      <LowerRow>
        <Window title="Sequence - Exhibit17_4.seq (Johnson's Rule)" icon="globe" idle w={508} h={533}>
          <Tools groups={[FILE_TOOLS, ['bolt', 'bars']]} />
          <SequenceTable />
        </Window>
        <RightStack>
          <Window title="Log Book - Exhibit17_4.seq" icon="note" idle h={238}>
            <Tools groups={[FILE_TOOLS, ['bars'], ['chainS', 'sBox', 'minusS']]} />
            <LogTable />
          </Window>
          <Window title="Job Pool - Exhibit17_4.job (Flow Shop)" icon="hammer" idle flex="1">
            <Tools top={5} groups={[FILE_TOOLS, ['plusJ', 'jBox', 'minusJ'], ['plusO', 'oBox', 'minusO']]} />
            <JobTable />
          </Window>
        </RightStack>
      </LowerRow>
      <MinRow>
        <MinWin>
          <Icon name="gears" />
          Machi...
          <WinButtons kind="docked" idle />
        </MinWin>
        <MinWin>
          <Icon name="chart" />
          Object...
          <WinButtons kind="docked" idle />
        </MinWin>
      </MinRow>
    </Desktop>
    <StatusBar>
      For Help, press F1
      <StatusPane $w={31} $ml="auto" />
      <StatusPane $w={33} />
      <StatusPane $w={37} />
    </StatusBar>
    <Taskbar>
      <StartBtn>
        <svg width="26" height="26" viewBox="0 0 16 16">{FLAG}</svg>
        start
      </StartBtn>
      <Grip $ml={9} />
      <QuickGrid>
        {QUICK.map((name, i) => <Icon key={i} name={name} size={17} />)}
      </QuickGrid>
      <Grip $ml={3} />
      <TaskGrid>
        {TASKS.map(([icon, label, active]) => (
          <TaskBtn key={label} $active={active}>
            <Icon name={icon} size={16} />
            {label}
          </TaskBtn>
        ))}
      </TaskGrid>
      <Grip $ml={8} />
      <LangTag>EN</LangTag>
      <Grip $ml={7} />
      <MediaPlayer />
      <Tray>
        <TrayIcons>
          <Icon name="outlook" size={17} />
          <svg width="15" height="15" viewBox="0 0 16 16"><circle cx="7" cy="7" r="6" fill="#555" stroke="#ccc" /><circle cx="7" cy="7" r="2.500" fill="#bbb" /><path d="M11 14q3-1 4-4" stroke="#9cf" fill="none" /></svg>
        </TrayIcons>
        <Clock>
          <span>11:34 PM</span>
          <span>Sunday</span>
        </Clock>
      </Tray>
      <TrayArrow>
        <svg width="10" height="10" viewBox="0 0 10 10" fill="none" stroke="#fff" strokeWidth="2"><path d="M7 1L3 5l4 4" /></svg>
      </TrayArrow>
    </Taskbar>
  </Screen>
)

export default App
